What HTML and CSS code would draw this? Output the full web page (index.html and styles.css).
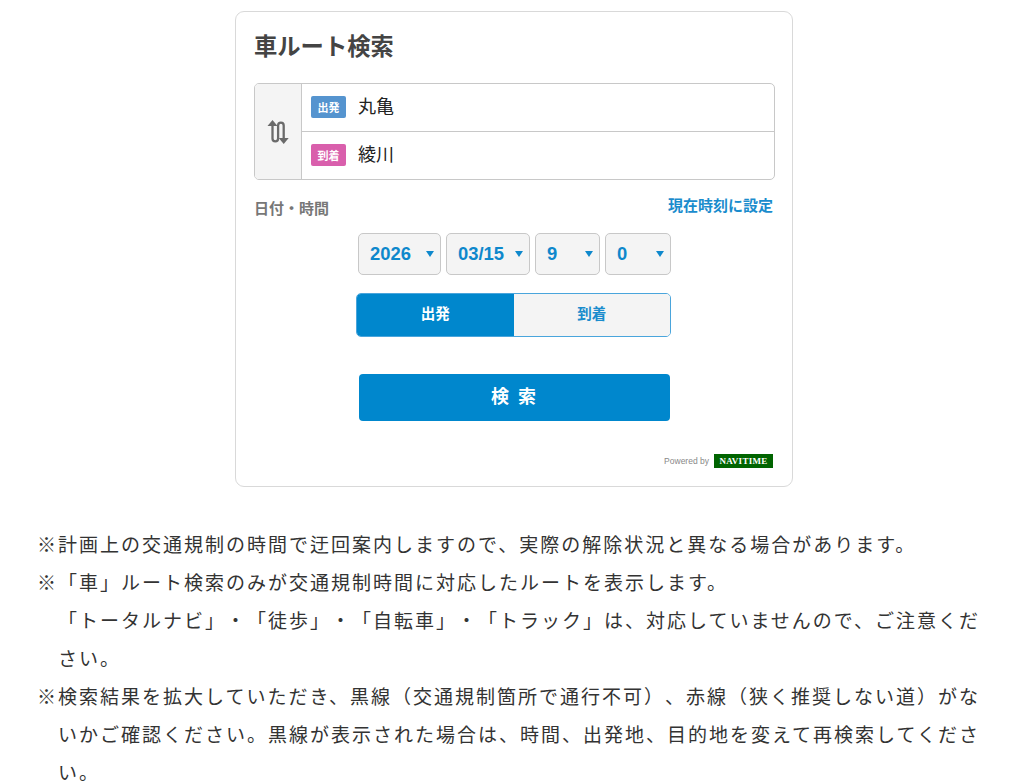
FILE: index.html
```html
<!DOCTYPE html>
<html lang="ja">
<head>
<meta charset="utf-8">
<title>車ルート検索</title>
<link rel="stylesheet" href="styles.css">
</head>
<body>
<main class="page">
  <section class="card">
    <h1 class="card-title">車ルート検索</h1>
    <div class="route">
      <div class="swap">
        <svg class="swap-icon" width="22" height="26" viewBox="0 0 22 26" fill="none" stroke="#6a6a6a" stroke-width="2.3">
          <path d="M0.5 7 L5.5 1 L10.5 7Z" stroke-width="0" fill="#6a6a6a"/>
          <path d="M5.5 5V19.5a2.8 2.8 0 0 0 5.6 0V6.5a2.8 2.8 0 0 1 5.6 0V21"/>
          <path d="M11.7 19 L16.7 25 L21.7 19Z" stroke-width="0" fill="#6a6a6a"/>
        </svg>
      </div>
      <div class="route-fields">
        <div class="route-row"><span class="tag tag-from">出発</span><span class="place">丸亀</span></div>
        <div class="route-row"><span class="tag tag-to">到着</span><span class="place">綾川</span></div>
      </div>
    </div>
    <div class="date-head">
      <span class="date-label">日付・時間</span>
      <a class="now-link">現在時刻に設定</a>
    </div>
    <div class="selects">
      <div class="select s-year"><span>2026</span><i class="caret"></i></div>
      <div class="select s-date"><span>03/15</span><i class="caret"></i></div>
      <div class="select s-num"><span>9</span><i class="caret"></i></div>
      <div class="select s-num"><span>0</span><i class="caret"></i></div>
    </div>
    <div class="toggle">
      <div class="toggle-item is-on">出発</div>
      <div class="toggle-item">到着</div>
    </div>
    <button class="search-btn">検 索</button>
    <div class="powered">
      <span class="powered-text">Powered by</span>
      <span class="navitime">NAVITIME</span>
    </div>
  </section>
  <div class="notes">
    <p class="note">※計画上の交通規制の時間で迂回案内しますので、実際の解除状況と異なる場合があります。</p>
    <p class="note">※「車」ルート検索のみが交通規制時間に対応したルートを表示します。<br>「トータルナビ」・「徒歩」・「自転車」・「トラック」は、対応していませんので、ご注意ください。</p>
    <p class="note">※検索結果を拡大していただき、黒線（交通規制箇所で通行不可）、赤線（狭く推奨しない道）がないかご確認ください。黒線が表示された場合は、時間、出発地、目的地を変えて再検索してください。</p>
  </div>
</main>
</body>
</html>
```
FILE: styles.css
```css
* { box-sizing: border-box; }
html, body { margin: 0; padding: 0; height: 783px; overflow: hidden; background: #fff; }
body { font-family: "Liberation Sans", "Noto Sans CJK JP", sans-serif; color: #333; }
.page { padding-top: 11px; }
.card {
  width: 558px; height: 476px; margin-left: 235px;
  border: 1px solid #d9d9d9; border-radius: 9px; background: #fff;
  padding: 0 17px 0 18px; display: flex; flex-direction: column;
}
.card-title { margin: 18px 0 0; font-size: 23.3px; line-height: 34px; font-weight: 700; color: #444; }
.route {
  display: flex; height: 97px; margin-top: 19px;
  border: 1px solid #c8c8c8; border-radius: 5px; overflow: hidden;
}
.swap { width: 47px; background: #f4f4f4; border-right: 1px solid #c8c8c8; display: flex; align-items: center; justify-content: center; }
.route-fields { flex: 1; display: flex; flex-direction: column; }
.route-row { flex: 1; display: flex; align-items: center; padding-left: 9px; }
.route-row + .route-row { border-top: 1px solid #c8c8c8; }
.tag { width: 35px; height: 22px; margin-bottom: 2px; border-radius: 2px; color: #fff; font-size: 11px; font-weight: 700; display: flex; align-items: center; justify-content: center; }
.tag-from { background: #5594cf; }
.tag-to { background: #d95fac; }
.place { margin-left: 12px; font-size: 18px; line-height: 24px; margin-bottom: 2px; color: #222; }
.date-head { display: flex; justify-content: space-between; align-items: flex-start; margin-top: 14px; padding-right: 2px; }
.date-label { font-size: 15px; line-height: 24px; margin-top: 3px; font-weight: 700; color: #777; }
.now-link { font-size: 15px; line-height: 24px; font-weight: 700; color: #1a8ccd; }
.selects { display: flex; gap: 5px; margin: 12px 0 0 104px; }
.select {
  height: 42px; border: 1px solid #c8c8c8; border-radius: 5px; background: #f4f4f4;
  display: flex; align-items: center; justify-content: space-between;
  padding: 0 6px 0 11px; color: #0e88cc; font-size: 18.4px; font-weight: 700;
}
.s-year { width: 83px; }
.s-date { width: 84px; }
.s-num { width: 65px; }
.s-num + .s-num { width: 66px; }
.caret { width: 0; height: 0; border-left: 4.5px solid transparent; border-right: 4.5px solid transparent; border-top: 6px solid #0e88cc; }
.toggle { display: flex; width: 315px; height: 44px; margin: 18px 0 0 102px; border: 1px solid #4aa5dc; border-radius: 5px; overflow: hidden; }
.toggle-item { flex: 1; background: #f4f4f4; color: #1a8ccd; font-size: 14.5px; font-weight: 700; display: flex; align-items: center; justify-content: center; padding-bottom: 5px; }
.toggle-item.is-on { background: #0087cd; color: #fff; }
.search-btn {
  width: 311px; height: 47px; margin: 37px 0 0 105px; padding: 0 0 6px; border: 0; border-radius: 4px;
  background: #0087cd; color: #fff; font: 700 18px "Liberation Sans", "Noto Sans CJK JP", sans-serif; letter-spacing: 2px;
}
.powered { display: flex; align-items: center; justify-content: flex-end; gap: 5px; margin-top: 33px; padding-right: 2px; }
.powered-text { font-size: 8.5px; color: #888; }
.navitime { width: 59px; height: 14px; background: #006400; color: #fff; font: 700 9px/14px "Liberation Serif", serif; text-align: center; letter-spacing: .3px; }
.notes { margin-top: 38px; padding: 0 40px 0 58px; }
.note { margin: 0; font-size: 19px; line-height: 38px; letter-spacing: 2px; text-indent: -21px; color: #333; font-family: "Noto Sans CJK JP", sans-serif; font-weight: 400; text-spacing-trim: space-all; }
```
